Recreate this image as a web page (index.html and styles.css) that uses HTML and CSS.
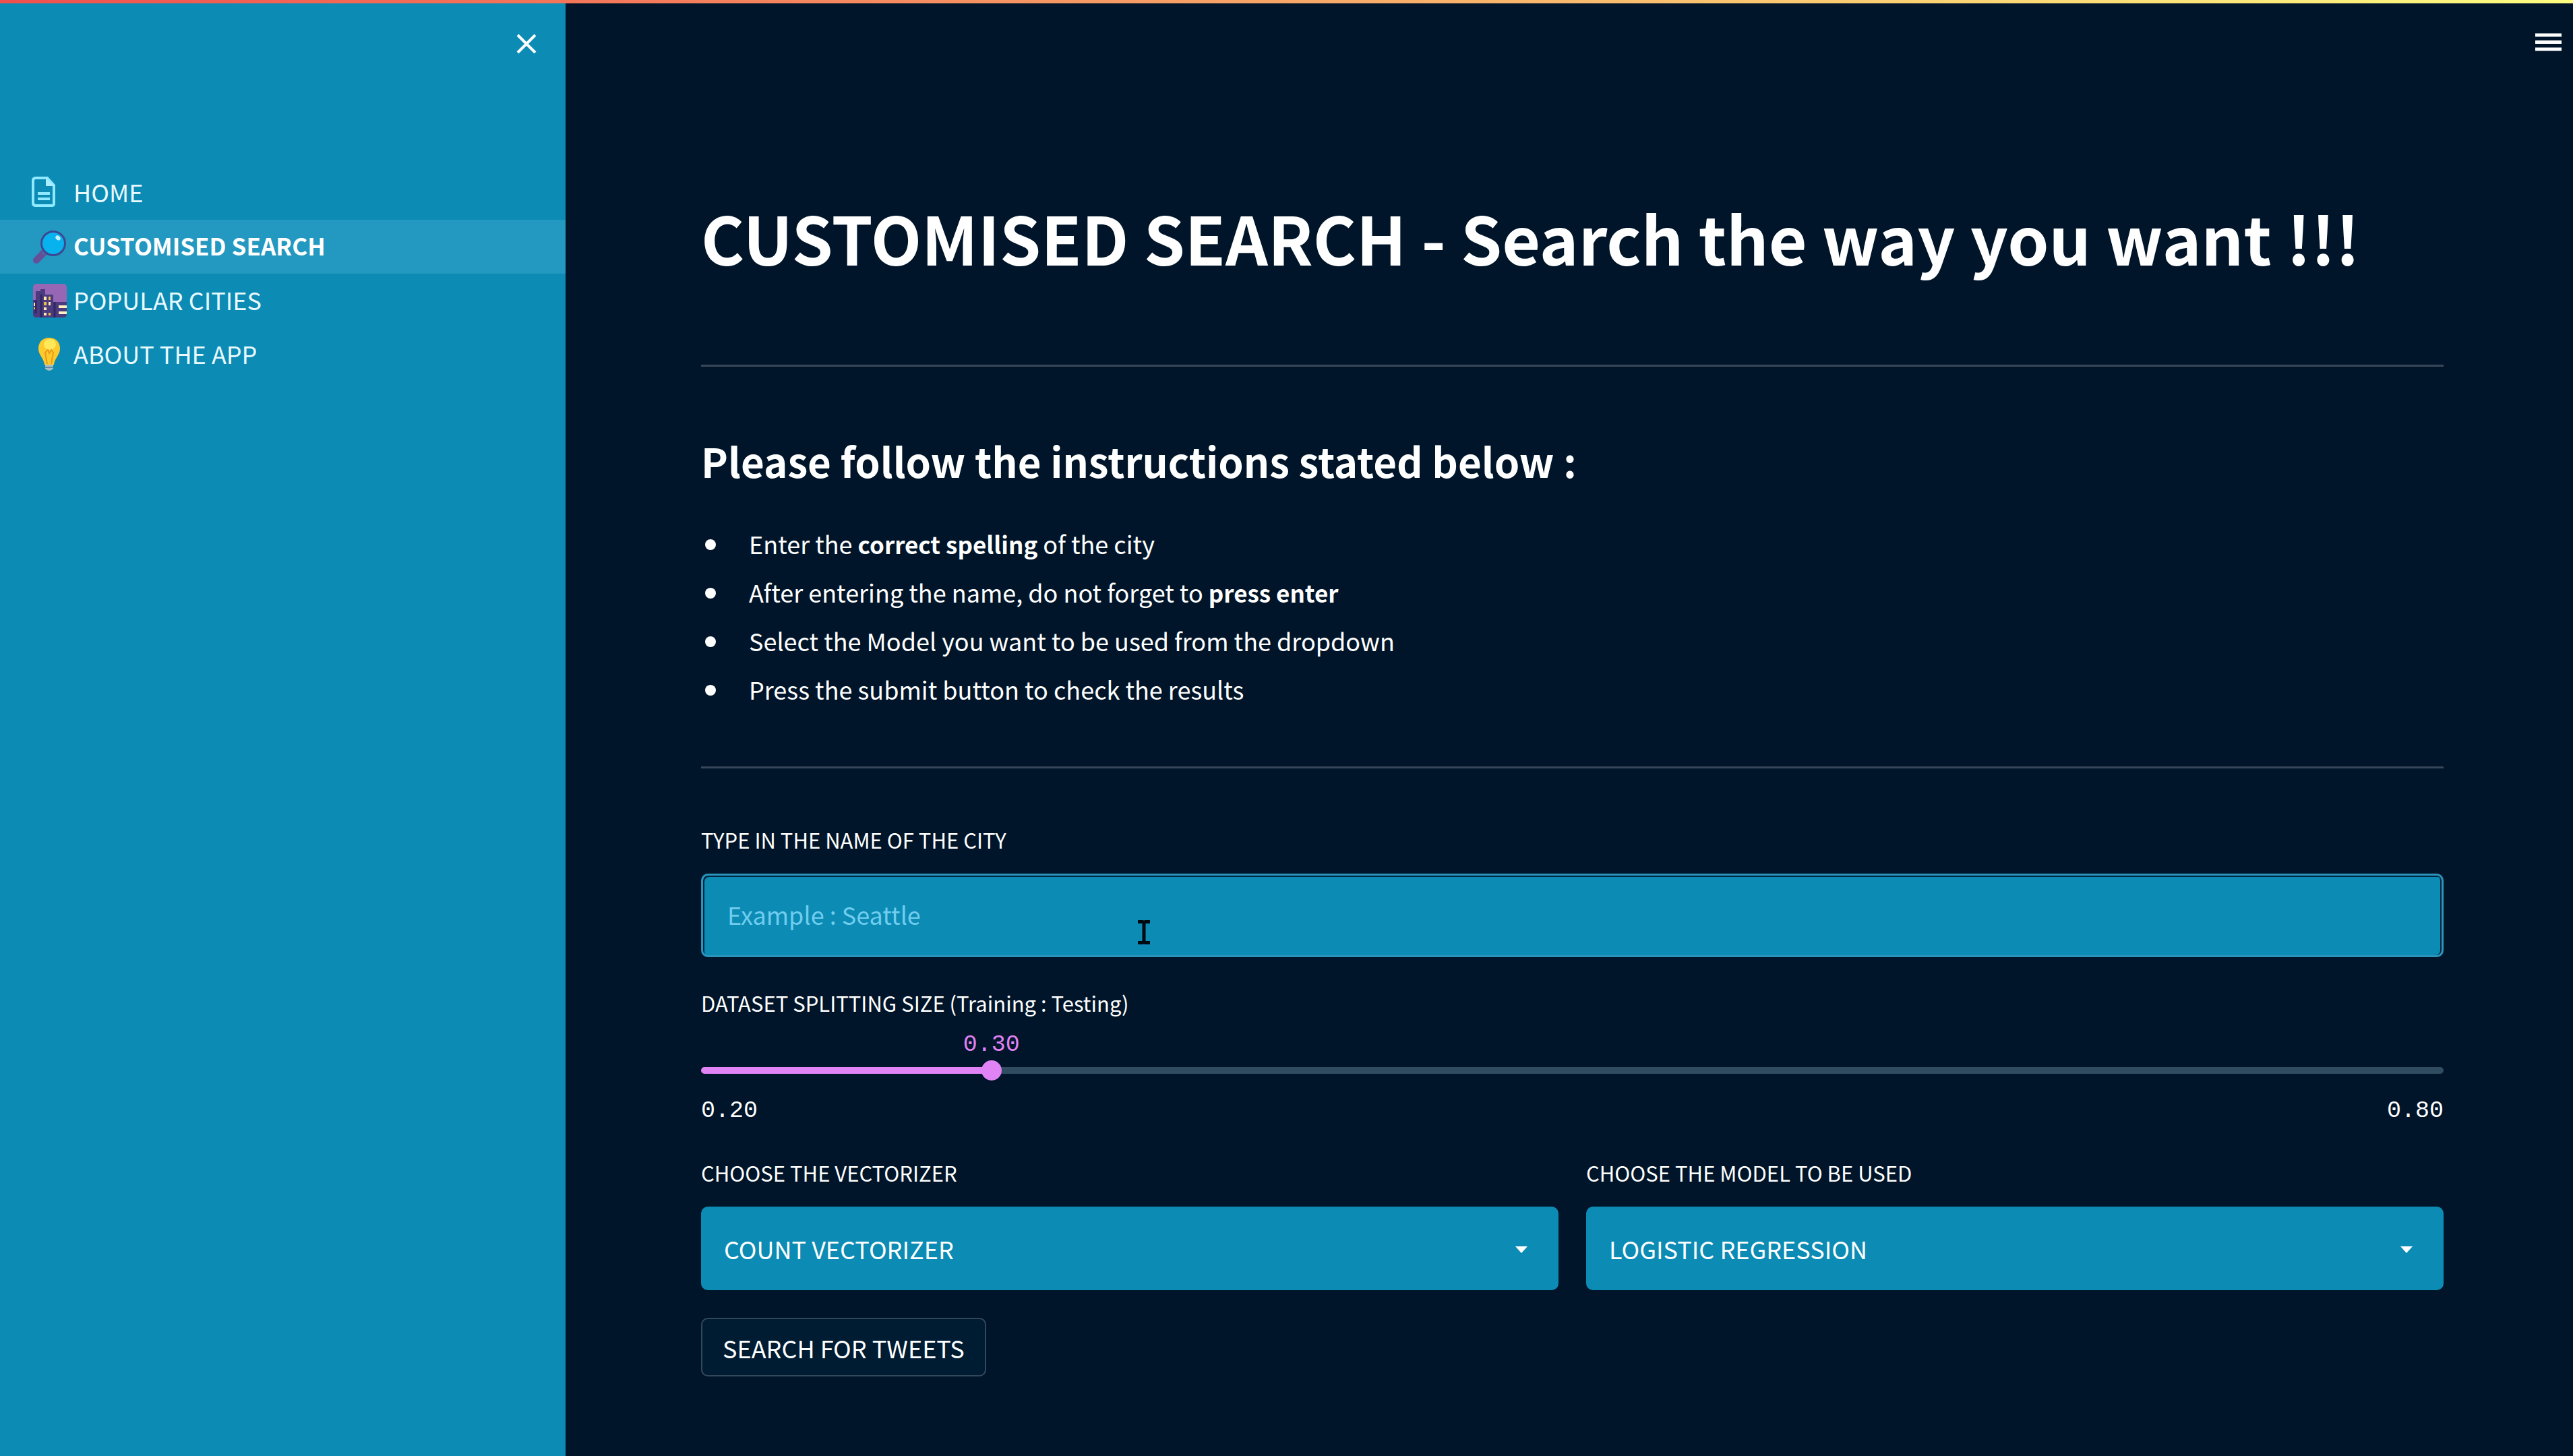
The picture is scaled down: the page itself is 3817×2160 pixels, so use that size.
FILE: index.html
```html
<!DOCTYPE html>
<html lang="en">
<head>
<meta charset="utf-8">
<title>Customised Search</title>
<link rel="stylesheet" href="styles.css">
</head>
<body>
<div class="decoration"></div>
<div class="app">
  <aside class="sidebar">
    <div class="sidebar-top">
      <button class="icon-button" type="button" aria-label="Close sidebar">
        <svg width="30" height="30" viewBox="0 0 30 30"><path d="M2 2 28 28M28 2 2 28" stroke="currentColor" stroke-width="4" fill="none"/></svg>
      </button>
    </div>
    <nav class="nav">
      <a class="nav-link" href="#home">
        <svg class="nav-icon" viewBox="0 0 50 50"><path d="M4 3H21L31 14V41Q31 44 28 44H4Q0 44 0 40V7Q0 3 4 3Z" fill="none" stroke="#8feaff" stroke-width="4"/><path d="M19 3 32 15H19Z" fill="#a9edff"/><path d="M7 26H25M7 34H25" stroke="#8feaff" stroke-width="4"/></svg>
        <span>HOME</span>
      </a>
      <a class="nav-link active" href="#search" aria-current="page">
        <svg class="nav-icon" viewBox="0 0 50 50"><path d="M17 33 5 45" stroke="#664e98" stroke-width="10" stroke-linecap="round"/><path d="M19 31 14 36" stroke="#50669f" stroke-width="5"/><circle cx="30" cy="20" r="17.500" fill="#08b2ee" stroke="#3c4892" stroke-width="3"/><ellipse cx="37" cy="12" rx="4" ry="3" transform="rotate(40 37 12)" fill="#c9f2ff"/></svg>
        <span>CUSTOMISED SEARCH</span>
      </a>
      <a class="nav-link" href="#cities">
        <svg class="nav-icon" viewBox="0 0 50 50"><rect width="50" height="50" rx="5" fill="#9667b4"/><path d="M0 24H4V11H11V8H18V16H30V27H50V45Q50 50 45 50H5Q0 50 0 45Z" fill="#4b3a7e"/><path d="M12 16V50M32 27V50M4 24V44" stroke="#2f2761" stroke-width="3"/><path d="M16 19H20V24H16ZM23 27H26V32H23ZM16 35H20V39H16ZM16 43H20V47H16ZM1 28H3V33H1Z" fill="#ffe9b0"/><path d="M23 19H26V24H23ZM16 27H20V32H16ZM23 43H26V47H23ZM1 35H3V38H1Z" fill="#e8c34a"/><path d="M38 34H50M38 43H50" stroke="#fff0bf" stroke-width="4"/></svg>
        <span>POPULAR CITIES</span>
      </a>
      <a class="nav-link" href="#about">
        <svg class="nav-icon" viewBox="0 0 50 50"><path d="M24 0C34 0 40 7 40 16C40 26 32 30 31 40H17C16 30 8 26 8 16C8 7 14 0 24 0Z" fill="#fccb2b"/><ellipse cx="25" cy="10" rx="9" ry="8" fill="#ffe95a"/><path d="M21 39 18 22 22 18 24 23 27 18 30 22 27 39" fill="none" stroke="#e89a1e" stroke-width="2"/><path d="M18 40H30V46Q24 52 18 46Z" fill="#a9bdc8"/><path d="M18 44H30" stroke="#64899c" stroke-width="2"/></svg>
        <span>ABOUT THE APP</span>
      </a>
    </nav>
  </aside>
  <div class="page">
    <header class="toolbar">
      <button class="icon-button" type="button" aria-label="Menu">
        <svg width="39" height="27" viewBox="0 0 39 27"><path d="M0 3H39M0 13.500H39M0 24H39" stroke="currentColor" stroke-width="5"/></svg>
      </button>
    </header>
    <main class="content">
      <h1>CUSTOMISED SEARCH - Search the way you want !!!</h1>
      <hr>
      <h2>Please follow the instructions stated below :</h2>
      <ul class="steps">
        <li><span>Enter the <strong>correct spelling</strong> of the city</span></li>
        <li><span>After entering the name, do not forget to <strong>press enter</strong></span></li>
        <li><span>Select the Model you want to be used from the dropdown</span></li>
        <li><span>Press the submit button to check the results</span></li>
      </ul>
      <hr>
      <form class="form">
        <div class="field">
          <label for="city">TYPE IN THE NAME OF THE CITY</label>
          <div class="overlay">
            <input class="box city" id="city" type="text" placeholder="Example : Seattle">
            <svg class="pointer" width="18" height="36" viewBox="0 0 18 36"><path d="M0 2.500H7L9 4L11 2.500H18M9 3V33M0 33.500H7L9 32L11 33.500H18" fill="none" stroke="#000810" stroke-width="5"/></svg>
          </div>
        </div>
        <div class="slider-field">
          <label for="split">DATASET SPLITTING SIZE (Training : Testing)</label>
          <div class="slider" style="--fill: 16.667%">
            <output class="value" for="split">0.30</output>
            <div class="overlay">
              <div class="track"></div>
              <input class="range" id="split" type="range" min="0.2" max="0.8" step="0.01" value="0.3">
            </div>
            <div class="limits"><span>0.20</span><span>0.80</span></div>
          </div>
        </div>
        <div class="columns">
          <div class="field">
            <label for="vectorizer">CHOOSE THE VECTORIZER</label>
            <div class="overlay">
              <select class="box" id="vectorizer"><option>COUNT VECTORIZER</option></select>
              <svg class="caret" width="18" height="10" viewBox="0 0 18 10"><path d="M0 0H18L9 10Z" fill="currentColor"/></svg>
            </div>
          </div>
          <div class="field">
            <label for="model">CHOOSE THE MODEL TO BE USED</label>
            <div class="overlay">
              <select class="box" id="model"><option>LOGISTIC REGRESSION</option></select>
              <svg class="caret" width="18" height="10" viewBox="0 0 18 10"><path d="M0 0H18L9 10Z" fill="currentColor"/></svg>
            </div>
          </div>
        </div>
        <button class="submit" type="submit">SEARCH FOR TWEETS</button>
      </form>
    </main>
  </div>
</div>
</body>
</html>
```

FILE: styles.css
```css
:root {
  --blue: #0c8bb5;
  --navy: #001529;
  --line: #38485a;
  --pink: #e083f5;
}

* {
  box-sizing: border-box;
}

body {
  margin: 0;
  background: var(--navy);
  color: #fff;
  font-family: "Noto Sans CJK SC", "Noto Sans", sans-serif;
  font-size: 36px;
  line-height: 72px;
}

input,
select,
button {
  margin: 0;
  font: inherit;
  color: inherit;
}

.decoration {
  position: fixed;
  inset: 0 0 auto;
  z-index: 1;
  height: 5px;
  background: linear-gradient(90deg, #f0504f, #fffd80);
}

.app {
  display: flex;
  min-height: 100vh;
}

/* Sidebar */

.sidebar {
  flex: 0 0 839px;
  background: var(--blue);
}

.sidebar-top {
  display: flex;
  justify-content: flex-end;
  height: 246px;
  padding: 50px 43px;
}

.icon-button {
  display: flex;
  align-self: flex-start;
  padding: 0;
  border: 0;
  background: none;
}

.nav-link {
  display: flex;
  align-items: center;
  gap: 10px;
  height: 80px;
  padding-left: 49px;
  color: #e9faff;
  text-decoration: none;
}

.nav-link span {
  padding-bottom: 4px;
}

.nav-link.active {
  background: #2398c0;
  color: #fff;
  font-size: 35px;
  font-weight: 700;
}

.nav-icon {
  width: 50px;
  height: 50px;
  overflow: visible;
}

/* Page */

.page {
  flex: 1;
  min-width: 0;
}

.toolbar {
  display: flex;
  justify-content: flex-end;
  height: 125px;
  padding: 49px 17px;
}

.content {
  padding: 160px 192px 80px 201px;
}

h1,
h2 {
  margin: 0;
  font-weight: 700;
}

h1 {
  font-size: 98px;
  line-height: 132px;
}

h2 {
  margin-bottom: 44px;
  font-size: 60px;
  line-height: 86px;
}

hr {
  height: 3px;
  margin: 79px 0 78px;
  border: 0;
  background: var(--line);
}

h1 + hr {
  margin: 124px 0 96px;
}

.steps {
  margin: 0;
  padding: 0 0 0 6px;
  list-style: none;
}

.steps li {
  display: flex;
  align-items: center;
  gap: 49px;
}

.steps li::before {
  content: "";
  width: 16px;
  height: 16px;
  margin-top: 4px;
  border-radius: 50%;
  background: #fff;
}

.steps strong {
  font-size: 35px;
  line-height: 1;
}

/* Form */

label {
  display: block;
  font-size: 31px;
  line-height: 56px;
}

.field label {
  margin-bottom: 22px;
}

.overlay {
  display: grid;
  align-items: center;
}

.overlay > * {
  grid-area: 1 / 1;
}

.box {
  width: 100%;
  height: 124px;
  padding: 0 34px;
  border: 0;
  border-radius: 10px;
  outline: 0;
  background: var(--blue);
  appearance: none;
}

.city {
  padding: 0 36px 4px;
  border: 3px solid #2b94bb;
  box-shadow: inset 2px 2px #00263d, inset -2px 0 #00263d;
}

.city::placeholder {
  color: #70cdee;
  opacity: 1;
}

.pointer {
  margin: 50px 0 0 648px;
  pointer-events: none;
}

.slider-field {
  margin: 40px 0 44px;
}

.slider {
  padding-top: 14px;
  font-family: "Liberation Mono", monospace;
  font-size: 35px;
  line-height: 40px;
}

.value {
  display: block;
  width: 84px;
  margin-left: calc(var(--fill) - 42px);
  color: var(--pink);
}

.track {
  height: 10px;
  border-radius: 5px;
  background: linear-gradient(90deg, var(--pink) var(--fill), #304c60 var(--fill));
}

.range {
  width: calc(100% + 30px);
  height: 36px;
  margin: 0 -15px;
  background: none;
  appearance: none;
}

.range::-webkit-slider-thumb {
  width: 30px;
  height: 30px;
  border-radius: 50%;
  background: var(--pink);
  appearance: none;
}

.limits {
  display: flex;
  justify-content: space-between;
  margin-top: 22px;
}

.columns {
  display: grid;
  grid-template-columns: 1fr 1fr;
  gap: 41px;
}

.caret {
  justify-self: end;
  margin: 4px 46px 0 0;
  pointer-events: none;
}

.submit {
  display: block;
  height: 87px;
  margin-top: 41px;
  padding: 0 30px;
  border: 2px solid #35485b;
  border-radius: 10px;
  background: #001c33;
  line-height: 80px;
}
```
